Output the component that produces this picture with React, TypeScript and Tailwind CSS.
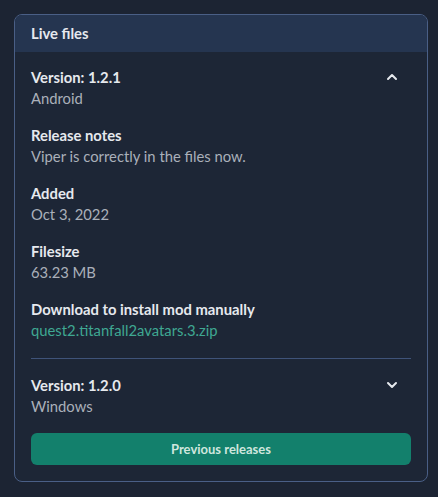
import { ChevronDown, ChevronUp } from "lucide-react";

type Field = { label: string; value: string; link?: boolean };

const fields: Field[] = [
  { label: "Release notes", value: "Viper is correctly in the files now." },
  { label: "Added", value: "Oct 3, 2022" },
  { label: "Filesize", value: "63.23 MB" },
  { label: "Download to install mod manually", value: "quest2.titanfall2avatars.3.zip", link: true },
];

export default function App() {
  return (
    <div
      className="min-h-[497px] bg-[#1c2433] pt-[14px] pl-[14px] pr-[10px] text-[14.8px] leading-[21px]"
      style={{ fontFamily: "Lato, 'Noto Sans', sans-serif" }}
    >
      <section className="border border-[#4a5f86] rounded-lg bg-[#1d2636] overflow-hidden">
        <h2 className="bg-[#253550] h-[37px] px-4 flex items-center font-bold text-[#e6e9ee]">Live files</h2>

        <div className="px-4 pt-[15px] pb-4">
          <div className="flex items-start justify-between">
            <div>
              <div className="font-bold text-[#e6e9ee]">Version: 1.2.1</div>
              <div className="text-[#aab0ba]">Android</div>
            </div>
            <ChevronUp className="w-4 h-4 mt-[2px] mr-[11px] text-[#e6e9ee]" strokeWidth={3} />
          </div>

          {fields.map((f) => (
            <div key={f.label} className="mt-4">
              <div className="font-bold text-[#e6e9ee]">{f.label}</div>
              {f.link ? (
                <a href="#" className="text-[#3fa892]">{f.value}</a>
              ) : (
                <div className="text-[#aab0ba]">{f.value}</div>
              )}
            </div>
          ))}

          <hr className="mt-[17px] mb-4 border-t border-[#3f5379]" />

          <div className="flex items-start justify-between">
            <div>
              <div className="font-bold text-[#e6e9ee]">Version: 1.2.0</div>
              <div className="text-[#aab0ba]">Windows</div>
            </div>
            <ChevronDown className="w-4 h-4 mt-[2px] mr-[11px] text-[#e6e9ee]" strokeWidth={3} />
          </div>

          <button className="mt-4 w-full h-8 rounded-md bg-[#13806c] text-[13px] font-bold text-[#cfe6de]">
            Previous releases
          </button>
        </div>
      </section>
    </div>
  );
}
